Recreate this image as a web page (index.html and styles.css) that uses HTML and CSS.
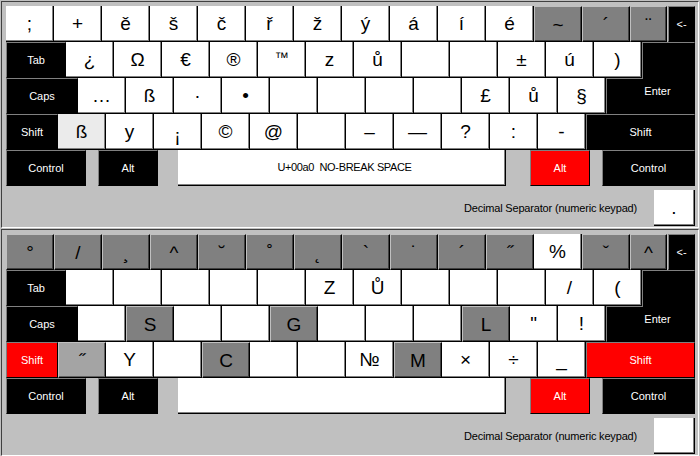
FILE: index.html
```html
<!DOCTYPE html>
<html>
<head>
<meta charset="utf-8">
<link rel="stylesheet" href="styles.css">
</head>
<body>
<div class="kb">
  <div class="row">
    <div class="key w">;</div><div class="key w">+</div><div class="key w">ě</div><div class="key w">š</div><div class="key w">č</div><div class="key w">ř</div><div class="key w">ž</div><div class="key w">ý</div><div class="key w">á</div><div class="key w">í</div><div class="key w">é</div><div class="key g">~</div><div class="key g">´</div><div class="key g narrow">¨</div><div class="key b bksp lbl">&lt;-</div>
  </div>
  <div class="row">
    <div class="key b lbl tab">Tab</div><div class="key w">¿</div><div class="key w">Ω</div><div class="key w">€</div><div class="key w">®</div><div class="key w small">™</div><div class="key w">z</div><div class="key w">ů</div><div class="key w"></div><div class="key w"></div><div class="key w">±</div><div class="key w">ú</div><div class="key w">)</div><div class="key b enter-top"></div>
  </div>
  <div class="row">
    <div class="key b lbl caps">Caps</div><div class="key w">…</div><div class="key w">ß</div><div class="key w">·</div><div class="key w">•</div><div class="key w"></div><div class="key w"></div><div class="key w"></div><div class="key w"></div><div class="key w">£</div><div class="key w">ů</div><div class="key w">§</div><div class="key b lbl enter-bot">Enter</div>
  </div>
  <div class="row">
    <div class="key b lbl lshift">Shift</div><div class="key w lt">ß</div><div class="key w">y</div><div class="key w low">¡</div><div class="key w">©</div><div class="key w">@</div><div class="key w"></div><div class="key w">–</div><div class="key w">—</div><div class="key w">?</div><div class="key w">:</div><div class="key w">-</div><div class="key b lbl rshift">Shift</div>
  </div>
  <div class="row">
    <div class="key b lbl ctrl">Control</div><div class="gap g12"></div><div class="key b lbl alt">Alt</div><div class="gap g20"></div><div class="key w lbl space">U+00a0  NO-BREAK SPACE</div><div class="gap g24"></div><div class="key r lbl alt">Alt</div><div class="gap g12"></div><div class="key b lbl rctrl">Control</div>
  </div>
  <div class="status">
    <span class="desc">Decimal Separator (numeric keypad)</span>
    <div class="key w dec">.</div>
  </div>
</div>

<div class="kb">
  <div class="row">
    <div class="key g">°</div><div class="key g">/</div><div class="key g">¸</div><div class="key g">^</div><div class="key g">˘</div><div class="key g">˚</div><div class="key g">˛</div><div class="key g">`</div><div class="key g">˙</div><div class="key g">´</div><div class="key g">˝</div><div class="key w">%</div><div class="key g">ˇ</div><div class="key g narrow">^</div><div class="key b bksp lbl">&lt;-</div>
  </div>
  <div class="row">
    <div class="key b lbl tab">Tab</div><div class="key w"></div><div class="key w"></div><div class="key w"></div><div class="key w"></div><div class="key w"></div><div class="key w">Z</div><div class="key w">Ů</div><div class="key w"></div><div class="key w"></div><div class="key w"></div><div class="key w">/</div><div class="key w">(</div><div class="key b enter-top"></div>
  </div>
  <div class="row">
    <div class="key b lbl caps">Caps</div><div class="key w"></div><div class="key g">S</div><div class="key w"></div><div class="key w"></div><div class="key g">G</div><div class="key w"></div><div class="key w"></div><div class="key w"></div><div class="key g">L</div><div class="key w">"</div><div class="key w">!</div><div class="key b lbl enter-bot">Enter</div>
  </div>
  <div class="row">
    <div class="key r lbl lshift">Shift</div><div class="key m">˝</div><div class="key w">Y</div><div class="key w"></div><div class="key g">C</div><div class="key w"></div><div class="key w"></div><div class="key w">№</div><div class="key g">M</div><div class="key w">×</div><div class="key w">÷</div><div class="key w">_</div><div class="key r lbl rshift">Shift</div>
  </div>
  <div class="row">
    <div class="key b lbl ctrl">Control</div><div class="gap g12"></div><div class="key b lbl alt">Alt</div><div class="gap g20"></div><div class="key w lbl space"></div><div class="gap g24"></div><div class="key r lbl alt">Alt</div><div class="gap g12"></div><div class="key b lbl rctrl">Control</div>
  </div>
  <div class="status">
    <span class="desc">Decimal Separator (numeric keypad)</span>
    <div class="key w dec"></div>
  </div>
</div>
</body>
</html>
```
FILE: styles.css
```css
html, body {
  margin: 0;
  padding: 0;
  background: #c0c0c0;
}
body {
  width: 700px;
  height: 456px;
  overflow: hidden;
  font-family: "Liberation Sans", Arial, sans-serif;
}
.kb {
  box-sizing: border-box;
  margin: 1px 0 0 1px;
  width: 698px;
  height: 227px;
  border-top: 1px solid #404040;
  border-left: 1px solid #404040;
  border-right: 1px solid #ffffff;
  border-bottom: 1px solid #ffffff;
  padding: 4px 3px 0 4px;
}
.row {
  display: flex;
  height: 36px;
}
.key {
  box-sizing: border-box;
  width: 48px;
  height: 36px;
  flex: none;
  display: flex;
  align-items: center;
  justify-content: center;
  border-right: 1px solid #000;
  border-bottom: 1px solid #000;
  font-size: 19px;
  color: #000;
  white-space: pre;
  line-height: 1;
}
.w {
  background: #fff;
  box-shadow: inset -1px -1px 0 #808080;
}
.lt {
  background: #ebebeb;
  box-shadow: inset -1px -1px 0 #808080;
}
.g {
  background: #808080;
  border-top: 1px solid #c0c0c0;
  border-left: 1px solid #c0c0c0;
  box-shadow: inset -1px -1px 0 #404040;
}
.m {
  background: #a4a4a4;
  border-top: 1px solid #c0c0c0;
  border-left: 1px solid #c0c0c0;
  box-shadow: inset -1px -1px 0 #606060;
}
.b {
  background: #000;
  color: #fff;
  border-top: 1px solid #808080;
  border-left: 1px solid #808080;
}
.r {
  background: #ff0000;
  color: #fff;
  border-top: 1px solid #808080;
  border-left: 1px solid #808080;
}
.lbl {
  font-size: 11px;
}
.w.lbl {
  color: #000;
}
.small {
  font-size: 14px;
  padding-bottom: 6px;
}
.low {
  padding-top: 7px;
}
.narrow {
  width: 37px;
}
.bksp {
  width: 27px;
  margin-left: 1px;
}
.tab { width: 60px; }
.caps { width: 72px; }
.lshift { width: 52px; }
.rshift { width: 109px; }
.ctrl { width: 80px; }
.alt { width: 60px; }
.rctrl { width: 93px; }
.space {
  width: 328px;
  padding-left: 6px;
  letter-spacing: -0.35px;
}
.gap { flex: none; }
.g12 { width: 12px; }
.g20 { width: 20px; }
.g24 { width: 24px; }
.enter-top {
  width: 53px;
  height: 36px;
  border-bottom: none;
}
.enter-bot {
  width: 89px;
  border-top: none;
  background: linear-gradient(#808080, #808080) top left / 36px 1px no-repeat, #000;
  padding: 0 0 9px 14px;
}
.status {
  display: flex;
  justify-content: flex-end;
  align-items: center;
  margin-top: 4px;
  height: 36px;
}
.desc {
  font-size: 11px;
  letter-spacing: -0.18px;
  color: #000;
  margin-right: 17px;
}
.dec {
  width: 41px;
}
```
